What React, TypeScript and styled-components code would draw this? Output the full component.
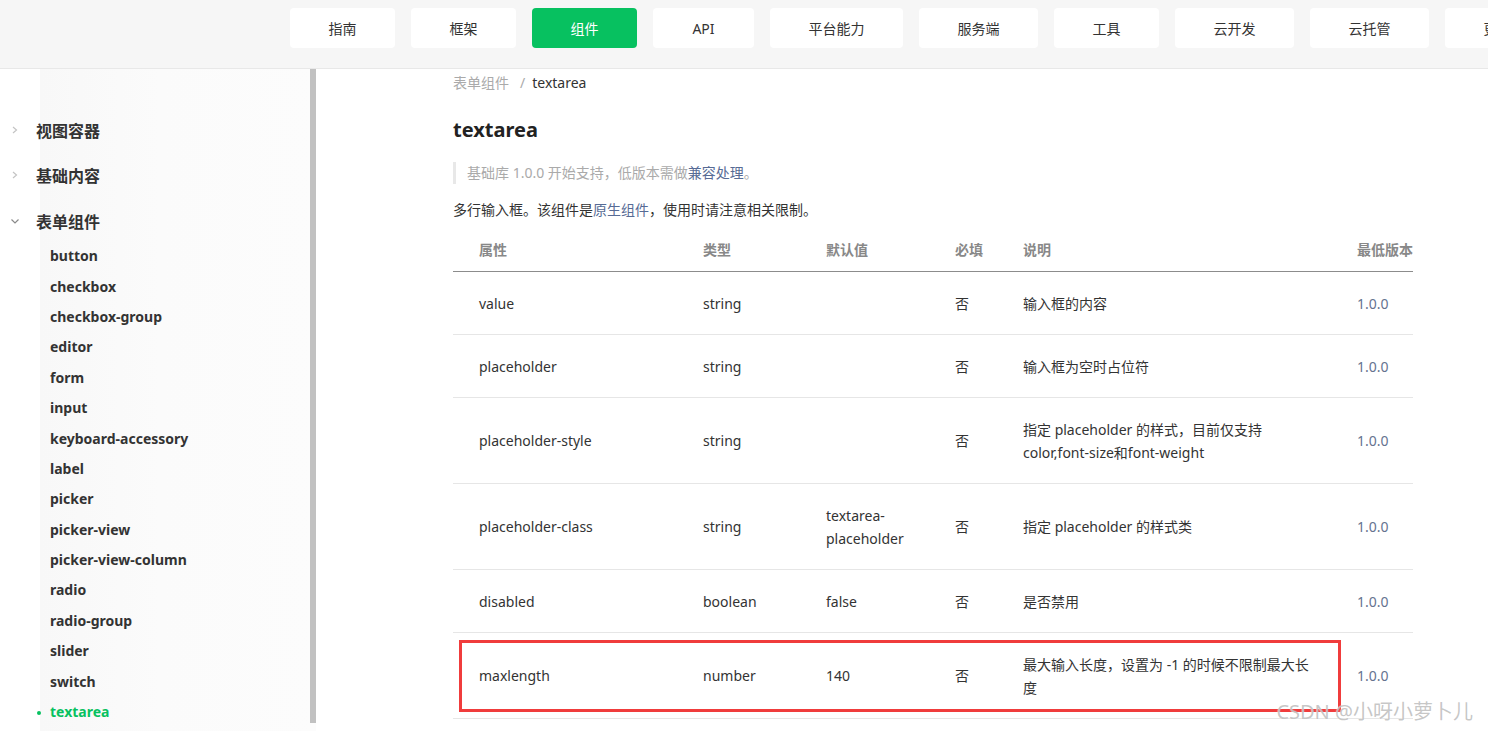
import React from "react";
import styled, { createGlobalStyle } from "styled-components";

const Global = createGlobalStyle`
  html, body { margin: 0; padding: 0; overflow: hidden; background: #fff; }
  body { font-family: "Noto Sans", "Noto Sans CJK SC", sans-serif; color: #333; }
  * { box-sizing: border-box; }
`;

const Page = styled.div`
  position: relative;
  width: 1488px;
  height: 731px;
  display: flex;
  flex-direction: column;
  overflow: hidden;
`;

const TopNav = styled.nav`
  flex: none;
  height: 69px;
  background: #f6f6f6;
  border-bottom: 1px solid #e8e8e8;
  display: flex;
  align-items: flex-start;
  gap: 16px;
  padding: 8px 0 0 290px;
  overflow: hidden;
`;

const NavButton = styled.div<{ $active?: boolean }>`
  flex: none;
  height: 40px;
  min-width: 101px;
  padding: 0 38.5px;
  border-radius: 4px;
  display: flex;
  align-items: center;
  justify-content: center;
  font-size: 14px;
  color: ${(p) => (p.$active ? "#fff" : "#333")};
  background: ${(p) => (p.$active ? "#07c160" : "#fff")};
  white-space: nowrap;
`;

const Body = styled.div`
  flex: 1;
  display: flex;
  min-height: 0;
`;

const Sidebar = styled.aside`
  flex: none;
  width: 316px;
  display: flex;
  background: linear-gradient(to right, #fff 40px, #f8f8f8 40px, #fbfbfb 160px, #fcfcfc);
`;

const SideList = styled.div`
  flex: 1;
  padding-top: 38px;
`;

const Track = styled.div`
  flex: none;
  width: 6px;
  display: flex;
  flex-direction: column;
`;

const Thumb = styled.div`
  height: 654px;
  background: #c1c1c1;
`;

const Category = styled.div`
  height: 45.5px;
  display: flex;
  align-items: center;
  font-size: 16px;
  font-weight: 600;
  color: #333;
  padding-left: 9px;
  gap: 15px;
`;

const Chevron = styled.svg`
  width: 12px;
  height: 12px;
  flex: none;
`;

const SubList = styled.div`
  margin-top: -3px;
`;

const SubItem = styled.div<{ $active?: boolean }>`
  position: relative;
  height: 30.4px;
  display: flex;
  align-items: center;
  padding-left: 50px;
  font-size: 14px;
  font-weight: 700;
  color: ${(p) => (p.$active ? "#07c160" : "#333")};
`;

const Dot = styled.span`
  position: absolute;
  left: 37px;
  top: 50%;
  width: 4px;
  height: 4px;
  margin-top: -1px;
  border-radius: 50%;
  background: #07c160;
`;

const Content = styled.main`
  flex: 1;
  padding: 3px 0 0 137px;
`;

const Inner = styled.div`
  width: 960px;
`;

const Crumbs = styled.div`
  font-size: 14px;
  line-height: 22px;
  color: #aaa;
`;

const Sep = styled.span`
  margin: 0 7px 0 11px;
`;

const CrumbCur = styled.span`
  color: #333;
`;

const Title = styled.h1`
  margin: 22px 0 0;
  font-size: 20px;
  line-height: 28px;
  font-weight: 700;
  color: #222;
`;

const Quote = styled.div`
  margin-top: 18px;
  border-left: 3px solid #e8e8e8;
  padding-left: 11px;
  font-size: 14px;
  line-height: 22px;
  color: #aaa;
`;

const Link = styled.span`
  color: #576b95;
`;

const Para = styled.p`
  margin: 15px 0 0;
  font-size: 14px;
  line-height: 22px;
  color: #333;
`;

const Table = styled.div`
  margin-top: 7px;
`;

const cols = "250px 123px 129px 68px 334px 56px";

const HeadRow = styled.div`
  display: grid;
  grid-template-columns: ${cols};
  border-bottom: 1px solid #8c8c8c;
  padding: 10.5px 0;
`;

const HeadCell = styled.div<{ $first?: boolean }>`
  padding-left: ${(p) => (p.$first ? "26px" : "0")};
  font-size: 14px;
  line-height: 22px;
  font-weight: 700;
  color: #888;
  white-space: nowrap;
`;

const Row = styled.div`
  display: grid;
  grid-template-columns: ${cols};
  align-items: center;
  border-bottom: 1px solid #e6e6e6;
  padding: 19.5px 0;
`;

const Cell = styled.div<{ $first?: boolean; $pr?: number; $muted?: boolean }>`
  padding-left: ${(p) => (p.$first ? "26px" : "0")};
  padding-right: ${(p) => p.$pr ?? 0}px;
  font-size: 14px;
  line-height: 23px;
  color: ${(p) => (p.$muted ? "#65738f" : "#333")};
`;

const RedBox = styled.div`
  position: absolute;
  left: 459px;
  top: 640px;
  width: 882px;
  height: 72px;
  border: 3px solid #f03c3c;
  pointer-events: none;
`;

const Watermark = styled.div`
  position: absolute;
  right: 15px;
  bottom: 6px;
  font-size: 20px;
  line-height: 26px;
  color: rgba(150, 150, 150, 0.55);
  text-shadow: 0 0 1px #fff;
  white-space: nowrap;
`;

const navItems = ["指南", "框架", "组件", "API", "平台能力", "服务端", "工具", "云开发", "云托管", "更多"];

const subItems = [
  "button",
  "checkbox",
  "checkbox-group",
  "editor",
  "form",
  "input",
  "keyboard-accessory",
  "label",
  "picker",
  "picker-view",
  "picker-view-column",
  "radio",
  "radio-group",
  "slider",
  "switch",
  "textarea",
];

type RowData = { name: string; type: string; def: string; req: string; desc: string; ver: string };

const rows: RowData[] = [
  { name: "value", type: "string", def: "", req: "否", desc: "输入框的内容", ver: "1.0.0" },
  { name: "placeholder", type: "string", def: "", req: "否", desc: "输入框为空时占位符", ver: "1.0.0" },
  {
    name: "placeholder-style",
    type: "string",
    def: "",
    req: "否",
    desc: "指定 placeholder 的样式，目前仅支持color,font-size和font-weight",
    ver: "1.0.0",
  },
  { name: "placeholder-class", type: "string", def: "textarea-placeholder", req: "否", desc: "指定 placeholder 的样式类", ver: "1.0.0" },
  { name: "disabled", type: "boolean", def: "false", req: "否", desc: "是否禁用", ver: "1.0.0" },
  { name: "maxlength", type: "number", def: "140", req: "否", desc: "最大输入长度，设置为 -1 的时候不限制最大长度", ver: "1.0.0" },
];

const ChevronRight = () => (
  <Chevron viewBox="0 0 12 12">
    <polyline points="4,3 7.5,6 4,9" fill="none" stroke="#c4c4c4" strokeWidth="1.2" />
  </Chevron>
);

const ChevronDown = () => (
  <Chevron viewBox="0 0 12 12">
    <polyline points="2.5,4.5 6,8 9.5,4.5" fill="none" stroke="#8a8a8a" strokeWidth="1.2" />
  </Chevron>
);

export default function App() {
  return (
    <Page>
      <Global />
      <TopNav>
        {navItems.map((n) => (
          <NavButton key={n} $active={n === "组件"}>
            {n}
          </NavButton>
        ))}
      </TopNav>
      <Body>
        <Sidebar>
          <SideList>
            <Category>
              <ChevronRight />
              视图容器
            </Category>
            <Category>
              <ChevronRight />
              基础内容
            </Category>
            <Category>
              <ChevronDown />
              表单组件
            </Category>
            <SubList>
              {subItems.map((s) => (
                <SubItem key={s} $active={s === "textarea"}>
                  {s === "textarea" && <Dot />}
                  {s}
                </SubItem>
              ))}
            </SubList>
          </SideList>
          <Track>
            <Thumb />
          </Track>
        </Sidebar>
        <Content>
          <Inner>
            <Crumbs>
              表单组件
              <Sep>/</Sep>
              <CrumbCur>textarea</CrumbCur>
            </Crumbs>
            <Title>textarea</Title>
            <Quote>
              基础库 1.0.0 开始支持，低版本需做<Link>兼容处理</Link>。
            </Quote>
            <Para>
              多行输入框。该组件是<Link>原生组件</Link>，使用时请注意相关限制。
            </Para>
            <Table>
              <HeadRow>
                <HeadCell $first>属性</HeadCell>
                <HeadCell>类型</HeadCell>
                <HeadCell>默认值</HeadCell>
                <HeadCell>必填</HeadCell>
                <HeadCell>说明</HeadCell>
                <HeadCell>最低版本</HeadCell>
              </HeadRow>
              {rows.map((r) => (
                <Row key={r.name}>
                  <Cell $first>{r.name}</Cell>
                  <Cell>{r.type}</Cell>
                  <Cell $pr={20}>{r.def}</Cell>
                  <Cell>{r.req}</Cell>
                  <Cell $pr={38}>{r.desc}</Cell>
                  <Cell $muted>{r.ver}</Cell>
                </Row>
              ))}
            </Table>
          </Inner>
        </Content>
      </Body>
      <RedBox />
      <Watermark>CSDN @小呀小萝卜儿</Watermark>
    </Page>
  );
}
